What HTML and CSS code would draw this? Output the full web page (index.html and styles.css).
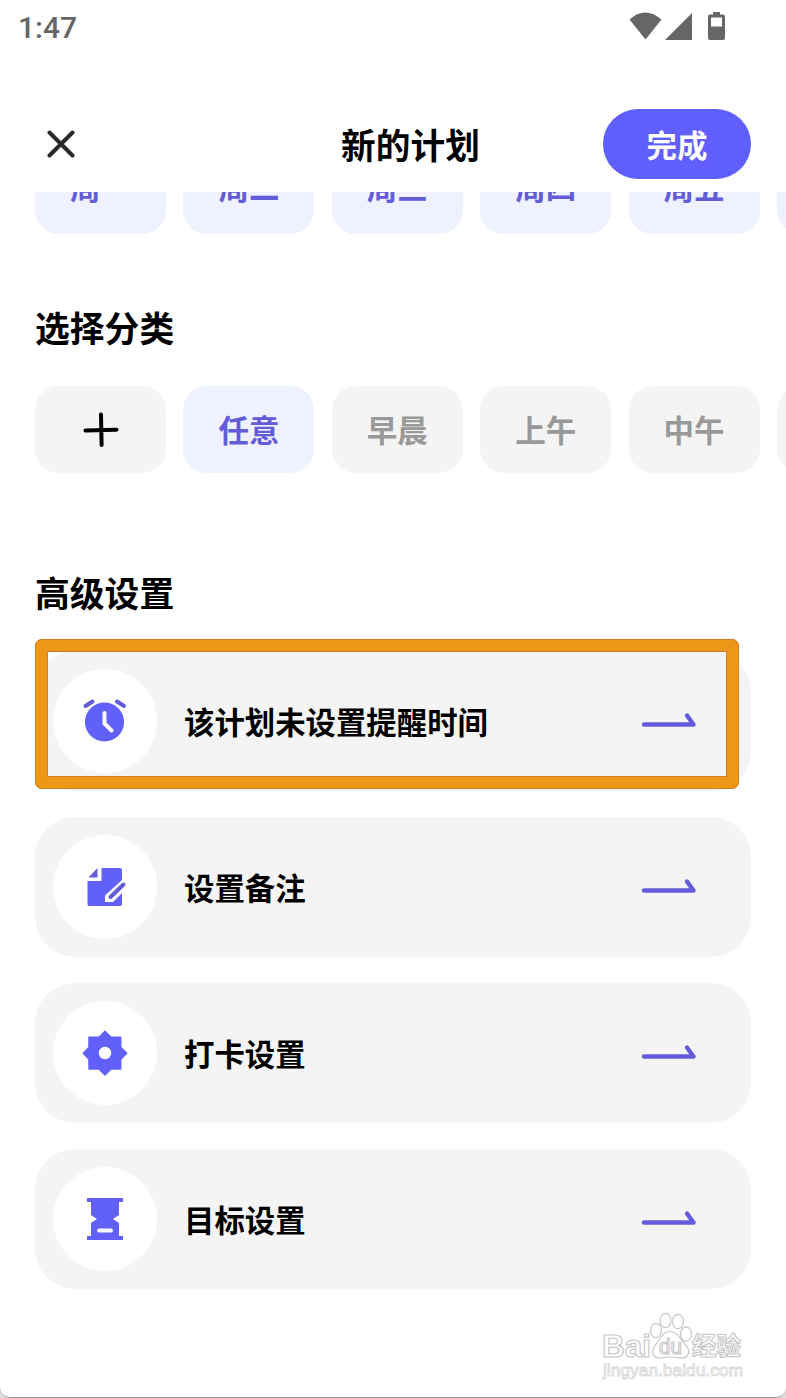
FILE: index.html
```html
<!DOCTYPE html>
<html lang="zh-CN">
<head>
<meta charset="utf-8">
<title>新的计划</title>
<link rel="stylesheet" href="styles.css">
</head>
<body>
<svg class="defs" aria-hidden="true">
  <symbol id="arrow" viewBox="0 0 56 18"><path d="M3 12.500H52.500L46 3.500" fill="none" stroke="#645bdc" stroke-width="4.400" stroke-linecap="round" stroke-linejoin="round"/></symbol>
</svg>
<div class="screen">
  <div class="status">
    <span class="time">1:47</span>
    <svg class="status-icons" width="98" height="30" viewBox="0 0 98 30" fill="#666">
      <path d="M1.500 7.500Q17-6.500 33.500 7.500L17.500 27.500Z"/>
      <path d="M37 28L64 1V28Z"/>
      <path fill-rule="evenodd" d="M85 0h7v2.500h3q2 0 2 2v21.500q0 2-2 2H82q-2 0-2-2v-21.500q0-2 2-2h3ZM83 5.500v9h11v-9Z"/>
    </svg>
  </div>
  <header class="header">
    <svg class="close" width="28" height="28" viewBox="0 0 28 28"><path d="M2.500 2.500L25.500 25.500M25.500 2.500L2.500 25.500" stroke="#292929" stroke-width="4" stroke-linecap="round"/></svg>
    <h1 class="title">新的计划</h1>
    <button class="done">完成</button>
  </header>
  <div class="week">
    <div class="chips">
      <div class="chip active">周一</div>
      <div class="chip active">周二</div>
      <div class="chip active">周三</div>
      <div class="chip active">周四</div>
      <div class="chip active">周五</div>
      <div class="chip active"></div>
    </div>
  </div>
  <h2 class="heading category">选择分类</h2>
  <div class="chips">
    <div class="chip add"><svg width="36" height="36" viewBox="0 0 36 36"><path d="M2.500 18.500L33.500 17.700M18 2.500L18.600 33" stroke="#000" stroke-width="4" stroke-linecap="round"/></svg></div>
    <div class="chip active">任意</div>
    <div class="chip">早晨</div>
    <div class="chip">上午</div>
    <div class="chip">中午</div>
    <div class="chip"></div>
  </div>
  <h2 class="heading advanced">高级设置</h2>
  <div class="cards">
    <div class="card">
      <span class="disc"><svg width="52" height="52" viewBox="0 0 52 52">
        <circle cx="25.500" cy="27" r="19.600" fill="#6260fa"/>
        <path d="M6.500 11L13.500 6.500M38 6.500L45 11" stroke="#625bd8" stroke-width="4" stroke-linecap="round"/>
        <path d="M25.500 18V28.500L32.500 35.500" fill="none" stroke="#f7f7ff" stroke-width="4" stroke-linecap="round" stroke-linejoin="round"/>
      </svg></span>
      <span class="label">该计划未设置提醒时间</span>
      <svg class="arrow"><use href="#arrow"/></svg>
      <div class="highlight"></div>
    </div>
    <div class="card">
      <span class="disc"><svg width="52" height="52" viewBox="0 0 52 52">
        <path d="M22.500 7H41Q43 7 43 9V19L26 34.500V41H34L43 32V43Q43 45 41 45H10Q8.500 45 8.500 43V20H22.500Z" fill="#6260fa"/>
        <path d="M9.500 16.500L18.500 7V16.500Z" fill="#625bd8"/>
        <path d="M44.500 23.500L31.500 36" stroke="#625bd8" stroke-width="4" stroke-linecap="round"/>
      </svg></span>
      <span class="label">设置备注</span>
      <svg class="arrow"><use href="#arrow"/></svg>
    </div>
    <div class="card">
      <span class="disc"><svg width="52" height="52" viewBox="0 0 52 52">
        <path fill-rule="evenodd" stroke="#6260fa" stroke-width="1.500" stroke-linejoin="round" fill="#6260fa" d="M26 4.300L32 10.300H41.700V20.300L47.700 26.300L41.700 32.300V42H32L26 48L20 42H10V32.300L4.300 26.300L10 20.300V10.300H20ZM26 19A7 7 0 1 0 26 33A7 7 0 1 0 26 19Z"/>
      </svg></span>
      <span class="label">打卡设置</span>
      <svg class="arrow"><use href="#arrow"/></svg>
    </div>
    <div class="card">
      <span class="disc"><svg width="52" height="52" viewBox="0 0 52 52">
        <path fill="#6260fa" d="M8 5H44V9H40V22L34 26L40 30V43H44V47H8V43H12V30L18 26L12 22V9H8Z"/>
        <path d="M20 37.500H32" stroke="#f7f7ff" stroke-width="4" stroke-linecap="round"/>
      </svg></span>
      <span class="label">目标设置</span>
      <svg class="arrow"><use href="#arrow"/></svg>
    </div>
  </div>
  <svg class="watermark" width="150" height="76" viewBox="0 0 150 76">
    <g fill="#fff" stroke="#c8c8c8" stroke-width="1.200">
      <text class="brand" x="0" y="45" textLength="49" lengthAdjust="spacingAndGlyphs">Bai</text>
      <ellipse cx="54" cy="18.500" rx="5.500" ry="7.200"/>
      <ellipse cx="63.500" cy="8.500" rx="5.500" ry="7.200"/>
      <ellipse cx="76" cy="9.500" rx="5.500" ry="7.200"/>
      <ellipse cx="84" cy="22" rx="5.500" ry="7.200"/>
      <path d="M68 19.500C75 19.500 77 25 82 31C90 39 87 46 79 46C75 46 73 45 68 45C63 45 61 46 58 46C50 46 48 39 55 31C60 25 61 19.500 68 19.500Z"/>
      <text class="du" x="57" y="42" textLength="23" lengthAdjust="spacingAndGlyphs">du</text>
      <text class="cn" x="90" y="43" textLength="49" lengthAdjust="spacingAndGlyphs">经验</text>
    </g>
    <text class="url" x="1" y="64" textLength="140" lengthAdjust="spacingAndGlyphs">jingyan.baidu.com</text>
  </svg>
</div>
</body>
</html>
```
FILE: styles.css
```css
* { box-sizing: border-box; }
body {
  margin: 0;
  background: #ddd;
  font-family: "Noto Sans CJK SC", sans-serif;
}
.defs { position: absolute; width: 0; height: 0; }
.screen {
  position: relative;
  width: 786px;
  height: 1398px;
  overflow: hidden;
  background: #fff;
  border-bottom: 1px solid #999;
  border-radius: 0 0 10px 10px;
}
.status {
  display: flex;
  justify-content: space-between;
  height: 56px;
  padding: 12px 60px 0 18px;
}
.time {
  font: 500 30px/31px Roboto, sans-serif;
  color: #666;
}
.header {
  display: flex;
  align-items: center;
  justify-content: space-between;
  height: 136px;
  padding: 40px 35px 0 47px;
}
.title {
  margin: 0 0 0 143px;
  font-size: 34.7px;
  line-height: 50px;
  font-weight: 700;
}
.done {
  width: 148px;
  height: 70px;
  padding: 0;
  border: 0;
  border-radius: 35px;
  background: #615efe;
  color: #fff;
  font: 700 30.5px/69px "Noto Sans CJK SC", sans-serif;
}
.week {
  display: flex;
  align-items: flex-end;
  height: 42px;
  overflow: hidden;
}
.chips {
  display: flex;
  gap: 17.400px;
  width: 786px;
  padding-left: 35px;
  overflow: hidden;
}
.chip {
  display: flex;
  flex: none;
  align-items: center;
  justify-content: center;
  width: 131px;
  height: 87px;
  padding-bottom: 2px;
  border-radius: 24px;
  background: #f4f4f4;
  color: #999;
  font-size: 30.5px;
  font-weight: 700;
}
.chip.add { padding-bottom: 0; }
.chip.active {
  background: #eff1fe;
  color: #625cd8;
}
.week .chip { padding-bottom: 10px; }
.heading {
  margin: 0 35px;
  font-size: 34.8px;
  line-height: 50px;
  font-weight: 700;
}
.category { padding: 68px 0 34px; }
.advanced { padding: 94px 0 34px; }
.cards {
  display: grid;
  gap: 26px;
  padding: 0 35px;
}
.card {
  position: relative;
  display: flex;
  align-items: center;
  height: 140px;
  padding: 0 54px 0 18px;
  border-radius: 40px;
  background: #f4f4f4;
}
.disc {
  display: flex;
  align-items: center;
  justify-content: center;
  width: 104px;
  height: 104px;
  border-radius: 50%;
  background: #fff;
}
.label {
  flex: 1;
  margin-left: 27px;
  padding-bottom: 1px;
  font-size: 30.4px;
  font-weight: 700;
}
.arrow { width: 56px; height: 18px; }
.highlight {
  position: absolute;
  left: 0;
  top: -12px;
  width: 704px;
  height: 150px;
  border: 12px solid #eb9717;
  border-radius: 7px;
  box-shadow: inset 0 0 0 1px #d67a24;
  outline: 1px solid #d87b25;
  outline-offset: -1px;
}
.watermark {
  position: absolute;
  left: 602px;
  top: 1312px;
  overflow: visible;
}
.brand { font: 700 32px "Liberation Sans", sans-serif; }
.du { font: 22px "Liberation Sans", sans-serif; }
.cn { font: 700 25px "Noto Sans CJK SC", sans-serif; }
.url {
  font: 16px "Liberation Sans", sans-serif;
  fill: #fff;
  stroke: #d6d6d6;
  stroke-width: 0.8px;
}
```
